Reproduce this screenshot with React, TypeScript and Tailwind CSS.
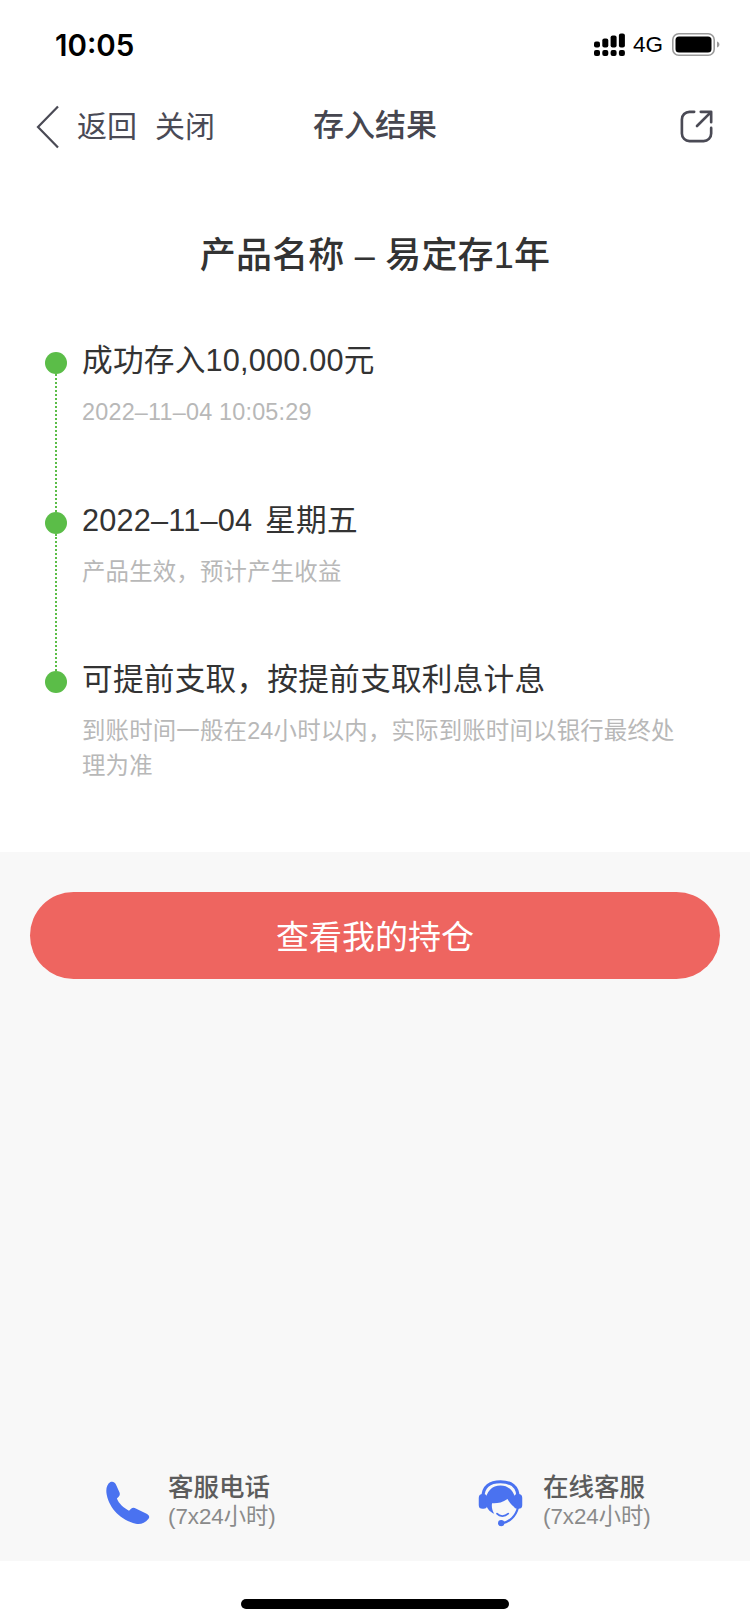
const font = { fontFamily: '"Liberation Sans", "Noto Sans CJK SC", sans-serif' };

function Signal() {
  const heights = [6, 9, 12, 14];
  return (
    <svg width="32" height="24" viewBox="0 0 32 24" fill="#000" className="block">
      {heights.map((h, i) => (
        <g key={i}>
          <rect x={i * 8.3} y={14.5 - h} width="6" height={h} rx="2" />
          <rect x={i * 8.3} y="17" width="6" height="6" rx="2" />
        </g>
      ))}
    </svg>
  );
}

function Battery() {
  return (
    <svg width="48" height="24" viewBox="0 0 48 24" className="block">
      <rect x="0.8" y="0.8" width="41.4" height="21.4" rx="6" fill="none" stroke="#9a9a9a" strokeWidth="1.6" />
      <rect x="3.5" y="3.5" width="36" height="16" rx="3.5" fill="#000" />
      <path d="M45 8.5c1.6.6 2.4 1.7 2.4 3s-.8 2.4-2.4 3z" fill="#9a9a9a" />
    </svg>
  );
}

function Step({ title, sub, last, h }: { title: string; sub: string; last?: boolean; h: string }) {
  return (
    <div className={`flex ${h}`}>
      <div className="w-[22px] flex flex-col items-center shrink-0 pt-[12px] ml-[1px]">
        <div className="w-[22px] h-[22px] rounded-full bg-[#5bbd48] shrink-0" />
        {!last && <div className="flex-1 border-l-2 border-dotted border-[#5bbd48] mb-[-12px]" />}
      </div>
      <div className="ml-[15px] flex-1 pr-[21px] tracking-[0.2px]">
        <div className="text-[30.7px] leading-[42px] text-[#333333] [word-spacing:4px]">{title}</div>
        <div className="mt-[13px] text-[23.4px] leading-[35px] text-[#b8b8b8]">{sub}</div>
      </div>
    </div>
  );
}

export default function App() {
  return (
    <div style={font} className="w-[750px] h-[1623px] bg-white flex flex-col overflow-hidden">
      <div className="h-[90px] pl-[55px] pr-[30px] flex items-center justify-between shrink-0">
        <span className="text-[29.5px] font-semibold text-black" style={{ fontFamily: 'Inter, sans-serif' }}>
          10:05
        </span>
        <div className="flex items-center">
          <Signal />
          <span className="ml-[7px] mr-[9px] text-[22.5px] leading-none text-black">4G</span>
          <Battery />
        </div>
      </div>

      <div className="h-[74px] pl-[36px] pr-[36px] flex items-center relative shrink-0">
        <svg width="24" height="44" viewBox="0 0 24 44" fill="none" stroke="#4a4a55" strokeWidth="2.2" className="block">
          <path d="M22 1.5 2 22l20 20.5" />
        </svg>
        <span className="ml-[17px] mt-[-1px] text-[30px] leading-none text-[#4a4a55]">返回</span>
        <span className="ml-[18px] mt-[-1px] text-[30px] leading-none text-[#4a4a55]">关闭</span>
        <span className="absolute left-0 right-0 mt-[-1px] text-center text-[31px] font-medium text-[#46464f] pointer-events-none">存入结果</span>
        <svg width="34" height="34" viewBox="0 0 36 36" fill="none" stroke="#4a4a55" strokeWidth="2.8" strokeLinecap="round" strokeLinejoin="round" className="ml-auto mt-[-2px] block">
          <path d="M15 3h-5a8 8 0 0 0-8 8v15a8 8 0 0 0 8 8h15a8 8 0 0 0 8-8v-6" />
          <path d="M22 3h11v11M33 3 18 18" />
        </svg>
      </div>

      <div className="h-[688px] shrink-0 px-[44px]">
        <div className="text-center text-[36px] tracking-[0.2px] font-medium text-[#333333] leading-[50px] mt-[67px] mx-[-44px]">
          产品名称 – 易定存1年
        </div>
        <div className="mt-[59px]">
          <Step h="h-[160px]" title="成功存入10,000.00元" sub="2022–11–04 10:05:29" />
          <Step h="h-[159px]" title="2022–11–04 星期五" sub="产品生效，预计产生收益" />
          <Step h="h-[120px]" last title="可提前支取，按提前支取利息计息" sub="到账时间一般在24小时以内，实际到账时间以银行最终处理为准" />
        </div>
      </div>

      <div className="h-[709px] shrink-0 bg-[#f8f8f8] flex flex-col px-[30px] pt-[40px]">
        <div className="h-[87px] rounded-full bg-[#ee6560] flex items-center justify-center text-[33px] text-white shrink-0 pt-[5px]">
          查看我的持仓
        </div>
        <div className="mt-auto mb-[30px] flex">
          <div className="ml-[76px] w-[372px] flex items-center">
            <svg width="44" height="44" viewBox="20 28 130 130" className="block shrink-0">
              <path
                fill="#4a72f0"
                d="M33 31C40 28 48 32 50 40L60 62C62 68 60 72 56 76L52 80C58 95 72 108 88 116L94 110C98 106 103 106 108 109L140 125C148 130 150 135 145 140C135 152 122 157 108 154C65 145 30 110 22 68C19 52 22 38 33 31Z"
              />
            </svg>
            <div className="ml-[18px]">
              <div className="text-[25.5px] leading-[32px] font-medium text-[#5c5c5c] mt-[-4px]">客服电话</div>
              <div className="text-[22.3px] leading-[28px] text-[#8a8a8a]">(7x24小时)</div>
            </div>
          </div>
          <div className="flex items-center">
            <svg width="45" height="47" viewBox="28 26 124 134" className="block shrink-0">
              <path fill="none" stroke="#4a72f0" strokeWidth="9" d="M40 75C40 45 60 31 90 31C120 31 140 45 140 75" />
              <rect x="28" y="66" width="24" height="42" rx="11" fill="#4a72f0" />
              <rect x="128" y="66" width="24" height="42" rx="11" fill="#4a72f0" />
              <path fill="#4a72f0" d="M48 92C46 60 66 42 90 42C114 42 134 60 132 92L130 104C122 98 115 90 110 80C95 91 78 93 66 92C64 102 66 112 72 122C58 116 49 104 48 92Z" />
              <path fill="none" stroke="#4a72f0" strokeWidth="5" strokeLinecap="round" d="M80 122C88 131 102 131 112 122" />
              <path fill="none" stroke="#4a72f0" strokeWidth="6" d="M140 104C134 130 115 146 95 149" />
              <circle cx="92" cy="149" r="9" fill="#4a72f0" />
            </svg>
            <div className="ml-[20px]">
              <div className="text-[25.5px] leading-[32px] font-medium text-[#5c5c5c] mt-[-4px]">在线客服</div>
              <div className="text-[22.3px] leading-[28px] text-[#8a8a8a]">(7x24小时)</div>
            </div>
          </div>
        </div>
      </div>

      <div className="flex-1 flex justify-center pt-[38px]">
        <div className="w-[268px] h-[10px] rounded-full bg-black" />
      </div>
    </div>
  );
}
